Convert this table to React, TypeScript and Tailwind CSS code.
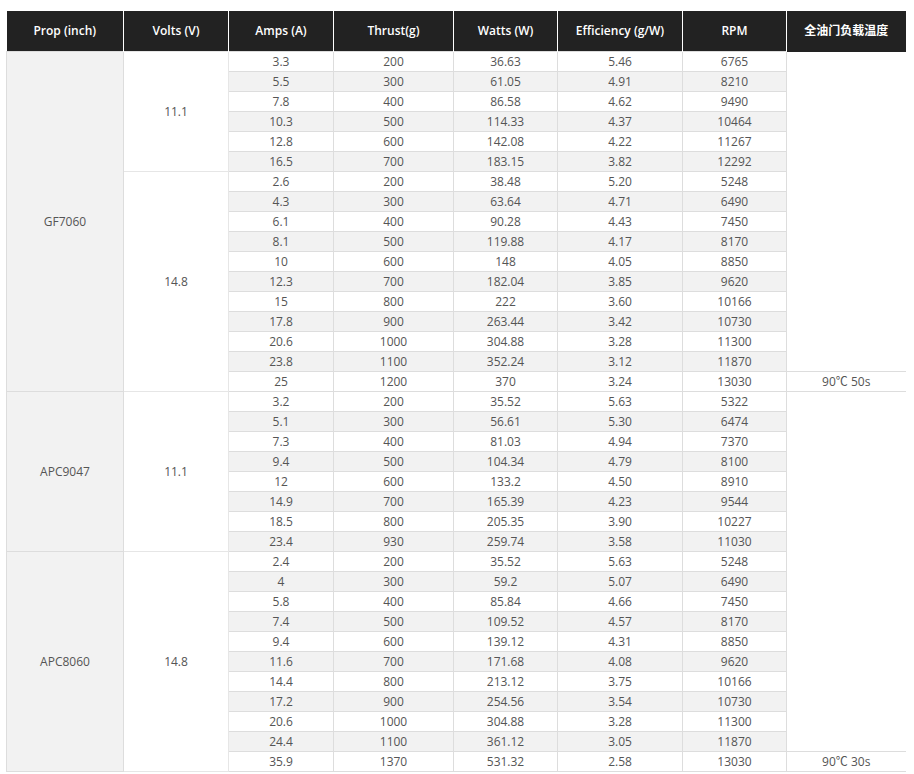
import React from "react";

type Row = [string, string, string, string, string];

const groups: {
  prop: string;
  volts: { v: string; rows: Row[] }[];
  temp: string;
}[] = [
  {
    prop: "GF7060",
    temp: "90℃ 50s",
    volts: [
      {
        v: "11.1",
        rows: [
          ["3.3", "200", "36.63", "5.46", "6765"],
          ["5.5", "300", "61.05", "4.91", "8210"],
          ["7.8", "400", "86.58", "4.62", "9490"],
          ["10.3", "500", "114.33", "4.37", "10464"],
          ["12.8", "600", "142.08", "4.22", "11267"],
          ["16.5", "700", "183.15", "3.82", "12292"],
        ],
      },
      {
        v: "14.8",
        rows: [
          ["2.6", "200", "38.48", "5.20", "5248"],
          ["4.3", "300", "63.64", "4.71", "6490"],
          ["6.1", "400", "90.28", "4.43", "7450"],
          ["8.1", "500", "119.88", "4.17", "8170"],
          ["10", "600", "148", "4.05", "8850"],
          ["12.3", "700", "182.04", "3.85", "9620"],
          ["15", "800", "222", "3.60", "10166"],
          ["17.8", "900", "263.44", "3.42", "10730"],
          ["20.6", "1000", "304.88", "3.28", "11300"],
          ["23.8", "1100", "352.24", "3.12", "11870"],
          ["25", "1200", "370", "3.24", "13030"],
        ],
      },
    ],
  },
  {
    prop: "APC9047",
    temp: "",
    volts: [
      {
        v: "11.1",
        rows: [
          ["3.2", "200", "35.52", "5.63", "5322"],
          ["5.1", "300", "56.61", "5.30", "6474"],
          ["7.3", "400", "81.03", "4.94", "7370"],
          ["9.4", "500", "104.34", "4.79", "8100"],
          ["12", "600", "133.2", "4.50", "8910"],
          ["14.9", "700", "165.39", "4.23", "9544"],
          ["18.5", "800", "205.35", "3.90", "10227"],
          ["23.4", "930", "259.74", "3.58", "11030"],
        ],
      },
    ],
  },
  {
    prop: "APC8060",
    temp: "90℃ 30s",
    volts: [
      {
        v: "14.8",
        rows: [
          ["2.4", "200", "35.52", "5.63", "5248"],
          ["4", "300", "59.2", "5.07", "6490"],
          ["5.8", "400", "85.84", "4.66", "7450"],
          ["7.4", "500", "109.52", "4.57", "8170"],
          ["9.4", "600", "139.12", "4.31", "8850"],
          ["11.6", "700", "171.68", "4.08", "9620"],
          ["14.4", "800", "213.12", "3.75", "10166"],
          ["17.2", "900", "254.56", "3.54", "10730"],
          ["20.6", "1000", "304.88", "3.28", "11300"],
          ["24.4", "1100", "361.12", "3.05", "11870"],
          ["35.9", "1370", "531.32", "2.58", "13030"],
        ],
      },
    ],
  },
];

const headers = [
  "Prop (inch)",
  "Volts (V)",
  "Amps (A)",
  "Thrust(g)",
  "Watts (W)",
  "Efficiency (g/W)",
  "RPM",
  "全油门负载温度",
];

export default function App() {
  return (
    <div
      className="bg-white min-h-screen pt-[11px] pl-[6px]"
      style={{ fontFamily: '"Open Sans", "Noto Sans CJK SC", sans-serif' }}
    >
      <table className="table-fixed border-collapse w-[899px] text-[12px] text-center">
        <colgroup>
          <col className="w-[117px]" />
          <col className="w-[105px]" />
          <col className="w-[105px]" />
          <col className="w-[120px]" />
          <col className="w-[104px]" />
          <col className="w-[125px]" />
          <col className="w-[104px]" />
          <col className="w-[119px]" />
        </colgroup>
        <thead>
          <tr>
            {headers.map((h, i) => (
              <th
                key={h}
                className={
                  "bg-[#222222] text-white font-semibold leading-[40px] p-0 border-white " +
                  (i > 0 ? "border-l" : "")
                }
              >
                {h}
              </th>
            ))}
          </tr>
        </thead>
        {groups.map((g) => {
          const total = g.volts.reduce((n, v) => n + v.rows.length, 0);
          let idx = 0;
          return (
            <tbody key={g.prop} className="text-[#555]">
              {g.volts.map((vg, vi) =>
                vg.rows.map((r, ri) => {
                  const i = idx++;
                  const stripe = i % 2 === 1 ? "bg-[#f2f2f2]" : "bg-white";
                  const last = i === total - 1;
                  return (
                    <tr key={`${vi}-${ri}`}>
                      {i === 0 && (
                        <td
                          rowSpan={total}
                          className="bg-[#f2f2f2] border border-[#dddddd] p-0"
                        >
                          {g.prop}
                        </td>
                      )}
                      {ri === 0 && (
                        <td
                          rowSpan={vg.rows.length}
                          className="bg-white border border-[#e6e6e6] p-0"
                        >
                          {vg.v}
                        </td>
                      )}
                      {r.map((c, ci) => (
                        <td
                          key={ci}
                          className={`${stripe} border border-[#dddddd] p-0 leading-[19px]`}
                        >
                          {c}
                        </td>
                      ))}
                      {g.temp
                        ? i === 0
                          ? (
                            <td rowSpan={total - 1} className="p-0" />
                          )
                          : last && (
                            <td className="border-y border-[#dddddd] p-0 bg-white">
                              {g.temp}
                            </td>
                          )
                        : i === 0 && <td rowSpan={total} className="p-0" />}
                    </tr>
                  );
                })
              )}
            </tbody>
          );
        })}
      </table>
    </div>
  );
}
